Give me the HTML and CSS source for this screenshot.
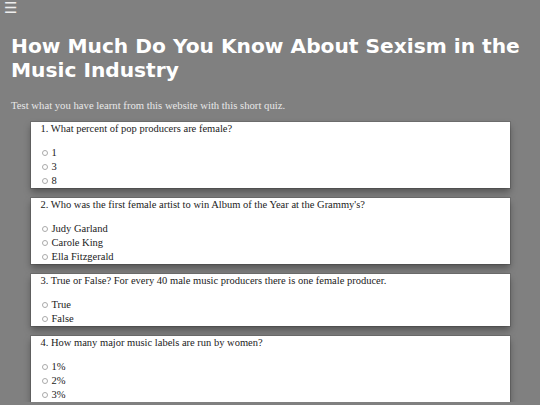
FILE: index.html
```html
<!DOCTYPE html>
<html>
<head>
<meta charset="utf-8">
<link rel="stylesheet" href="styles.css">
</head>
<body>
<div class="menu">☰</div>
<h1 class="title">How Much Do You Know About Sexism in the Music Industry</h1>
<p class="intro">Test what you have learnt from this website with this short quiz.</p>
<div class="quiz">
  <div class="card">
    <p class="q">1. What percent of pop producers are female?</p>
    <ul class="opts">
      <li><span class="radio"></span>1</li>
      <li><span class="radio"></span>3</li>
      <li><span class="radio"></span>8</li>
    </ul>
  </div>
  <div class="card">
    <p class="q">2. Who was the first female artist to win Album of the Year at the Grammy's?</p>
    <ul class="opts">
      <li><span class="radio"></span>Judy Garland</li>
      <li><span class="radio"></span>Carole King</li>
      <li><span class="radio"></span>Ella Fitzgerald</li>
    </ul>
  </div>
  <div class="card">
    <p class="q">3. True or False? For every 40 male music producers there is one female producer.</p>
    <ul class="opts">
      <li><span class="radio"></span>True</li>
      <li><span class="radio"></span>False</li>
    </ul>
  </div>
  <div class="card">
    <p class="q">4. How many major music labels are run by women?</p>
    <ul class="opts">
      <li><span class="radio"></span>1%</li>
      <li><span class="radio"></span>2%</li>
      <li><span class="radio"></span>3%</li>
    </ul>
  </div>
</div>
</body>
</html>
```

FILE: styles.css
```css
html, body {
  margin: 0;
  padding: 0;
  background: #808080;
}
body {
  font-family: "Liberation Serif", serif;
  overflow: hidden;
}
.menu {
  color: #eeeeee;
  font-family: "DejaVu Sans", sans-serif;
  font-size: 15px;
  line-height: 16px;
  padding: 0 0 0 4px;
}
.title {
  margin: 18px 0 0 11px;
  color: #ffffff;
  font-family: "DejaVu Sans", sans-serif;
  font-weight: bold;
  font-size: 20.2px;
  line-height: 24px;
}
.intro {
  margin: 16px 0 10px 11px;
  color: #e8e8e8;
  font-size: 10.7px;
  line-height: 14px;
}
.quiz {
  display: flex;
  flex-direction: column;
  gap: 10px;
  align-items: center;
}
.card {
  width: 479px;
  box-sizing: border-box;
  background: #ffffff;
  padding: 0 10px;
  box-shadow: 0 4px 7px rgba(0, 0, 0, 0.35), 0 0 0 1px rgba(0, 0, 0, 0.12);
  color: #222222;
  font-size: 10.5px;
  line-height: 14px;
}
.q {
  margin: 0 0 10px 0;
}
.opts {
  list-style: none;
  margin: 0;
  padding: 0;
}
.opts li {
  display: flex;
  align-items: center;
  gap: 4px;
}
.radio {
  width: 4px;
  height: 4px;
  border: 1px solid #aaaaaa;
  border-radius: 50%;
  margin-left: 1px;
}
```
